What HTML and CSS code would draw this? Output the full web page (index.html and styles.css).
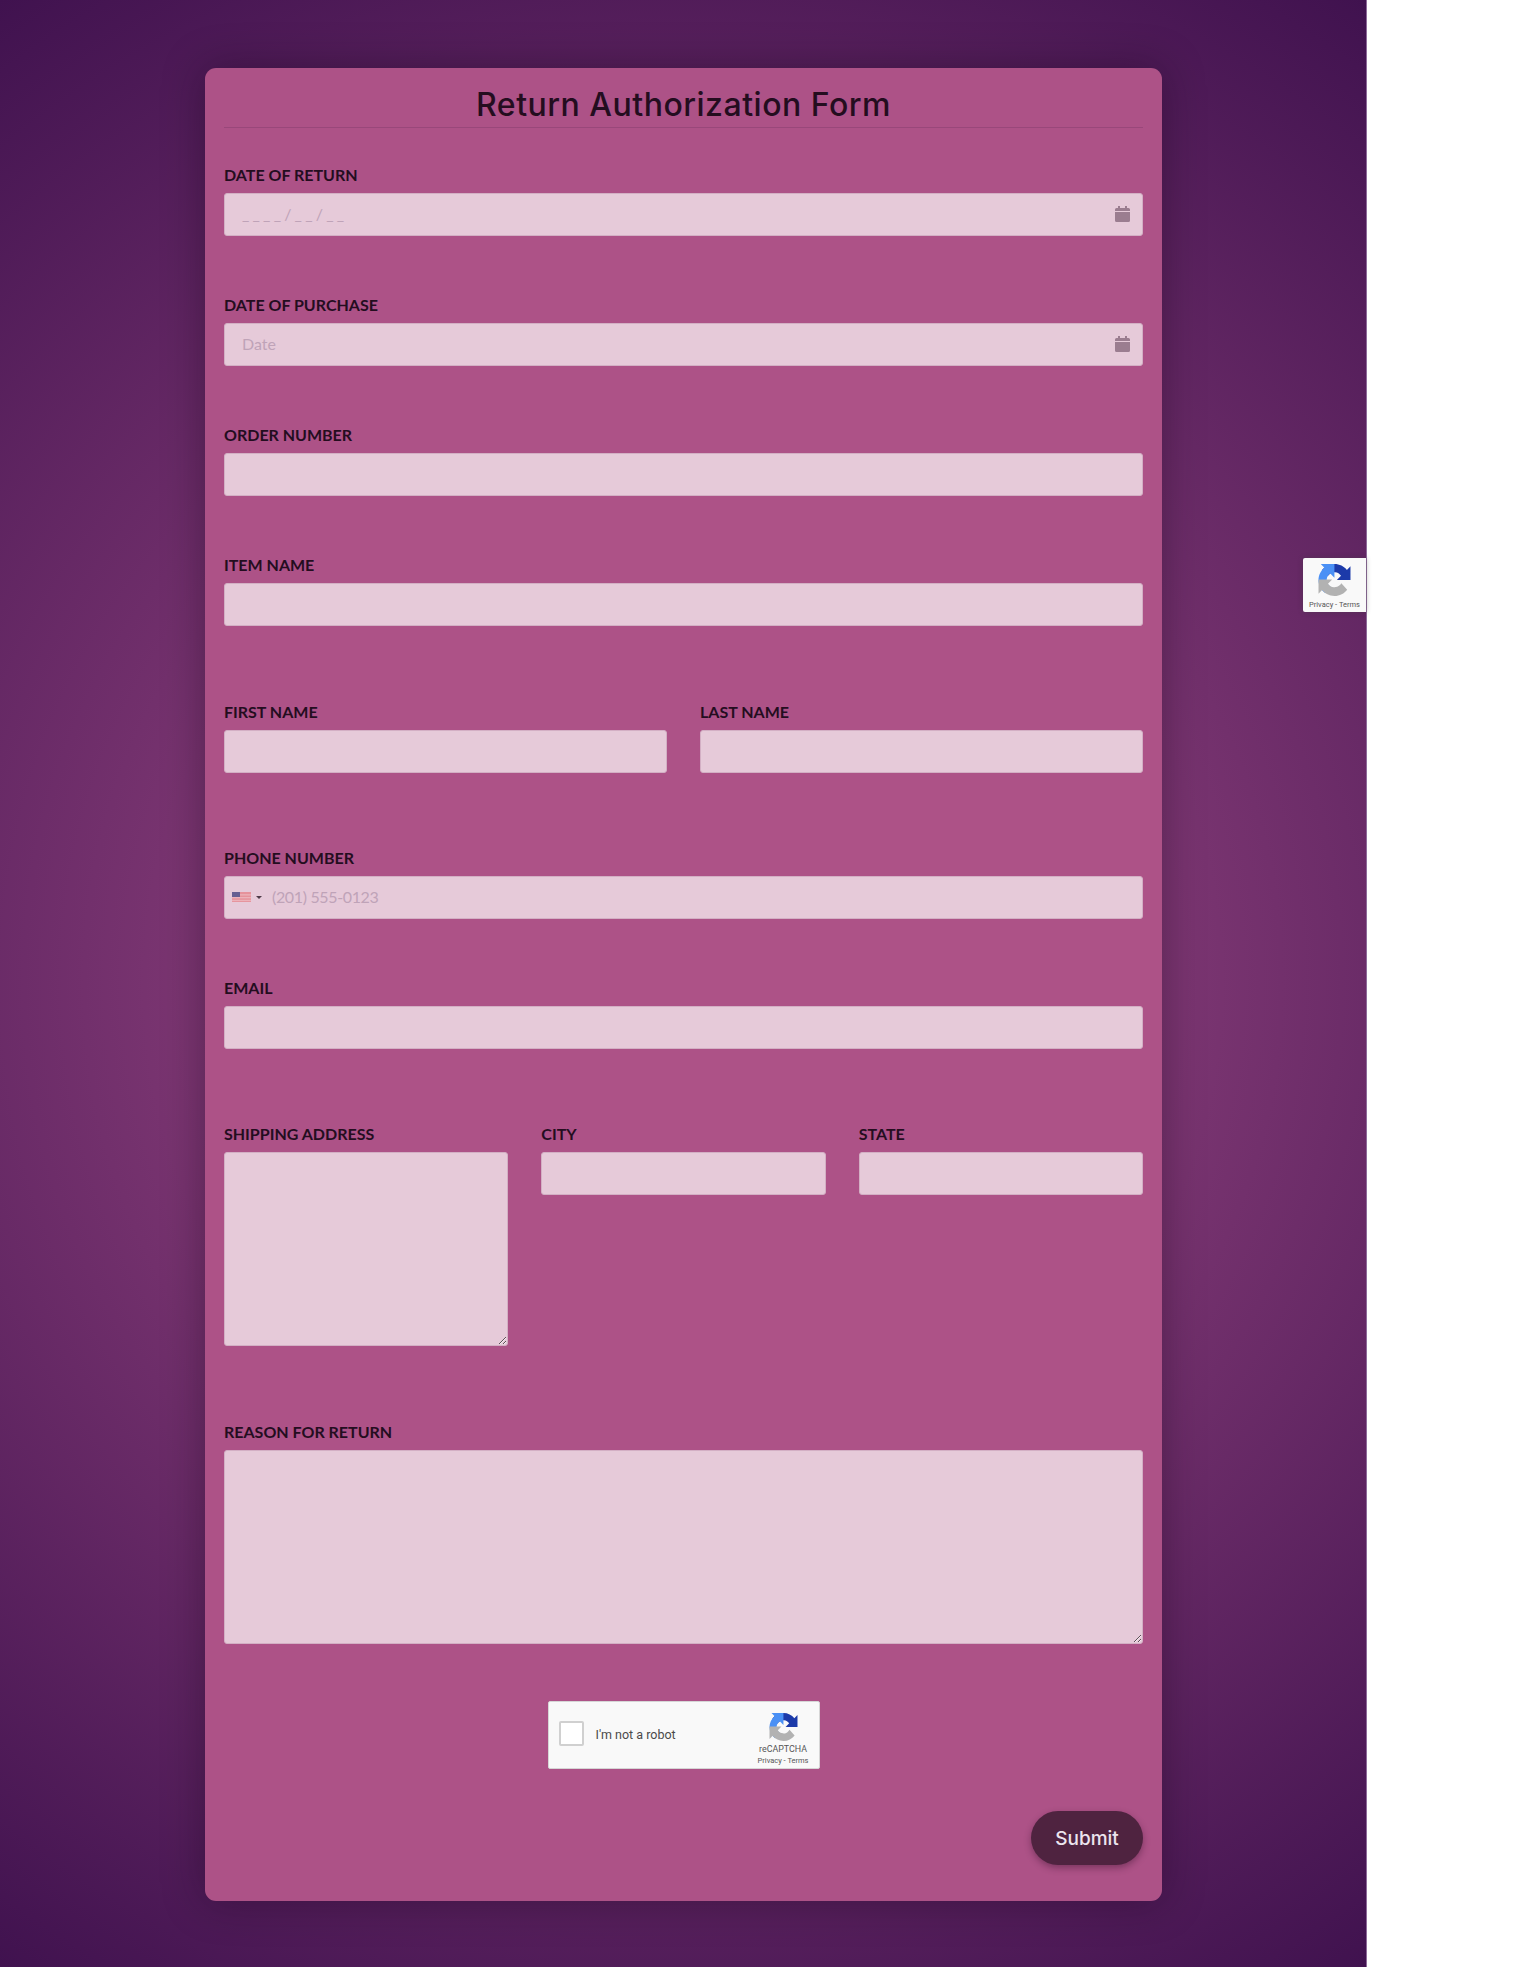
FILE: index.html
```html
<!DOCTYPE html>
<html lang="en">

<head>
  <meta charset="UTF-8" />
  <title>Return Authorization Form</title>
  <link rel="stylesheet" href="styles.css">
</head>

<body>
  <!-- reCAPTCHA logo, reused twice -->
  <svg class="sprite" width="0" height="0">
    <symbol id="captchaLogo" viewBox="0 0 64 64">
      <path d="M64 31.955l-.033-1.37V4.687l-7.16 7.16C50.948 4.674 42.033.093 32.05.093c-10.4 0-19.622 4.96-25.458 12.64l11.736 11.86a15.55 15.55 0 0 1 4.754-5.334c2.05-1.6 4.952-2.906 8.968-2.906.485 0 .86.057 1.135.163 4.976.393 9.288 3.14 11.828 7.124l-8.307 8.307 26.3.007" fill="#1c3aa9" />
      <path d="M31.862.094l-1.37.033H4.594l7.16 7.16C4.58 13.147 0 22.06 0 32.046c0 10.4 4.96 19.622 12.64 25.458L24.5 45.768a15.55 15.55 0 0 1-5.334-4.754c-1.6-2.05-2.906-4.952-2.906-8.968 0-.485.057-.86.163-1.135.393-4.976 3.14-9.288 7.124-11.828l8.307 8.307.007-26.3" fill="#4a90f5" />
      <path d="M0 32.037l.033 1.37v25.898l7.16-7.16c5.86 7.173 14.774 11.754 24.76 11.754 10.4 0 19.622-4.96 25.458-12.64L45.674 38.4a15.55 15.55 0 0 1-4.754 5.334c-2.05 1.6-4.952 2.906-8.968 2.906-.485 0-.86-.057-1.135-.163-4.976-.393-9.288-3.14-11.828-7.124l8.307-8.307-26.3-.007" fill="#b2b2b2" />
    </symbol>
    <symbol id="calendarIcon" viewBox="0 0 15 16">
      <path d="M3 0h2v2h5V0h2v2h1.500A1.500 1.500 0 0 1 15 3.500V5H0V3.500A1.500 1.500 0 0 1 1.500 2H3zM0 6h15v8.500a1.500 1.500 0 0 1-1.500 1.500h-12A1.500 1.500 0 0 1 0 14.500z" fill="currentColor" />
    </symbol>
  </svg>

  <div class="page">
    <form class="card">
      <h1 class="title">Return Authorization Form</h1>

      <!-- Dates et commande -->
      <div class="section first">
        <div class="field">
          <label>DATE OF RETURN</label>
          <div class="input-wrap">
            <input class="date-mask" type="text" placeholder="____/__/__">
            <svg class="cal"><use href="#calendarIcon" /></svg>
          </div>
        </div>
        <div class="field">
          <label>DATE OF PURCHASE</label>
          <div class="input-wrap">
            <input type="text" placeholder="Date">
            <svg class="cal"><use href="#calendarIcon" /></svg>
          </div>
        </div>
        <div class="field">
          <label>ORDER NUMBER</label>
          <input type="text">
        </div>
        <div class="field">
          <label>ITEM NAME</label>
          <input type="text">
        </div>
      </div>

      <div class="section row two">
        <div class="field">
          <label>FIRST NAME</label>
          <input type="text">
        </div>
        <div class="field">
          <label>LAST NAME</label>
          <input type="text">
        </div>
      </div>

      <div class="section contact">
        <div class="field">
          <label>PHONE NUMBER</label>
          <div class="input-wrap">
            <input class="phone" type="text" placeholder="(201) 555-0123">
            <div class="flag-box">
              <svg class="flag" viewBox="0 0 19 10">
                <rect width="19" height="10" fill="#e6929b" />
                <rect y="2.200" width="19" height="1.300" fill="#ecb2ba" />
                <rect y="5" width="19" height="1.300" fill="#ecb2ba" />
                <rect y="7.800" width="19" height="1.300" fill="#ecb2ba" />
                <rect width="8" height="5" fill="#675f92" />
              </svg>
              <span class="caret"></span>
            </div>
          </div>
        </div>
        <div class="field">
          <label>EMAIL</label>
          <input type="text">
        </div>
      </div>

      <div class="section row three">
        <div class="field">
          <label>SHIPPING ADDRESS</label>
          <textarea></textarea>
        </div>
        <div class="field">
          <label>CITY</label>
          <input type="text">
        </div>
        <div class="field">
          <label>STATE</label>
          <input type="text">
        </div>
      </div>

      <div class="section reason">
        <div class="field">
          <label>REASON FOR RETURN</label>
          <textarea></textarea>
        </div>
      </div>

      <!-- Captcha -->
      <div class="captcha">
        <span class="captcha-box"></span>
        <span class="captcha-text">I'm not a robot</span>
        <div class="captcha-brand">
          <svg class="captcha-logo"><use href="#captchaLogo" /></svg>
          <span class="captcha-name">reCAPTCHA</span>
          <span class="captcha-links">Privacy - Terms</span>
        </div>
      </div>

      <div class="actions">
        <button type="button" class="btn">Submit</button>
      </div>
    </form>

    <!-- Badge flottant -->
    <div class="badge">
      <svg class="badge-logo"><use href="#captchaLogo" /></svg>
      <span class="badge-links">Privacy - Terms</span>
    </div>
  </div>
</body>

</html>
```

FILE: styles.css
```css
/* --- Variables CSS --- */
:root {
  --card-color: #ad5287;
  --field-color: #e6cad9;
  --field-border: #d3afc4;
  --text-color: #240d1f;
  --placeholder: #bfa3b8;
  --icon-color: #9b7d90;
  --font-main: "Lato", "Noto Sans", sans-serif;
  --font-title: "Inter", "Lato", sans-serif;
}

/* --- Base --- */
html,
body {
  margin: 0;
  background: #ffffff;
}

body {
  font-family: var(--font-main);
  color: var(--text-color);
}

.sprite {
  position: absolute;
}

.page {
  position: relative;
  width: 1367px;
  height: 1967px;
  padding-top: 68px;
  box-sizing: border-box;
  border-right: 1px solid #8d6a99;
  background: radial-gradient(circle at 50% 50%, #a44e89 0%, #40124f 100%);
}

/* --- Carte --- */
.card {
  width: 957px;
  box-sizing: border-box;
  margin: 0 0 0 205px;
  padding: 0 19px 36px;
  background: var(--card-color);
  border-radius: 11px;
  box-shadow: 0 0 42px rgba(20, 5, 20, 0.38);
}

.title {
  height: 59px;
  margin: 0;
  border-bottom: 1px solid #99477a;
  font-family: var(--font-title);
  font-size: 32px;
  font-weight: 500;
  line-height: 73px;
  letter-spacing: 0.5px;
  text-align: center;
  box-sizing: content-box;
}

/* --- Champs --- */
.section {
  margin-bottom: 75.500px;
}

.section.first {
  padding-top: 37px;
  margin-bottom: 76.500px;
}

.section.row {
  display: grid;
  column-gap: 33px;
}

.section.two {
  grid-template-columns: 1fr 1fr;
}

.section.three {
  grid-template-columns: 1fr 1fr 1fr;
  margin-bottom: 76px;
}

.section.reason {
  margin-bottom: 57px;
}

.field {
  margin-bottom: 59.500px;
}

.field:last-child,
.row .field {
  margin-bottom: 0;
}

label {
  display: block;
  height: 20px;
  margin-bottom: 8px;
  font-size: 16px;
  font-weight: 700;
  line-height: 20px;
}

input,
textarea {
  display: block;
  width: 100%;
  box-sizing: border-box;
  border: 1px solid var(--field-border);
  border-radius: 3px;
  background: var(--field-color);
  font-family: var(--font-main);
  font-size: 16px;
  color: var(--text-color);
  outline: none;
}

input {
  height: 42.500px;
  padding: 0 17px 1px;
}

textarea {
  height: 194px;
  padding: 10px 17px;
}

input::placeholder {
  color: var(--placeholder);
  opacity: 1;
}

input.date-mask {
  letter-spacing: 3.200px;
}

.input-wrap {
  position: relative;
}

.cal {
  position: absolute;
  top: 13px;
  right: 13px;
  width: 15px;
  height: 16px;
  color: var(--icon-color);
}

/* --- Téléphone --- */
input.phone {
  padding-left: 47px;
  letter-spacing: -0.350px;
}

.flag-box {
  position: absolute;
  top: 16px;
  left: 8px;
  display: flex;
  align-items: center;
  gap: 5px;
}

.flag {
  display: block;
  width: 19px;
  height: 10px;
}

.caret {
  width: 0;
  height: 0;
  border-left: 3px solid transparent;
  border-right: 3px solid transparent;
  border-top: 3px solid #4d3a48;
}

/* --- Captcha --- */
.captcha {
  display: flex;
  align-items: center;
  width: 272px;
  height: 68px;
  box-sizing: border-box;
  margin: 0 auto 42px;
  padding: 0 10px;
  background: #f9f9f9;
  border: 1px solid #d6d6d6;
  border-radius: 2px;
  font-family: "Roboto", sans-serif;
}

.captcha-box {
  width: 25px;
  height: 25px;
  box-sizing: border-box;
  margin-top: -3px;
  background: #ffffff;
  border: 2px solid #d0d0d0;
  border-radius: 2px;
}

.captcha-text {
  margin-top: -2px;
  margin-left: 12px;
  font-size: 12.500px;
  color: #4a4a4a;
}

.captcha-brand {
  display: flex;
  flex-direction: column;
  align-items: center;
  margin-left: auto;
  padding-top: 7px;
  color: #555555;
}

.captcha-logo {
  width: 29px;
  height: 28px;
  margin-bottom: 3px;
}

.captcha-name {
  font-size: 8.900px;
  line-height: 11px;
}

.captcha-links {
  margin-top: 1px;
  font-size: 7.500px;
  line-height: 9px;
}

/* --- Bouton --- */
.actions {
  display: flex;
  justify-content: flex-end;
}

.btn {
  width: 112px;
  height: 54px;
  border: none;
  border-radius: 27px;
  background: #4f2340;
  box-shadow: 0 3px 7px rgba(50, 15, 40, 0.4);
  color: #ece4ee;
  font-family: var(--font-title);
  font-size: 19px;
  font-weight: 500;
  cursor: pointer;
}

/* --- Badge --- */
.badge {
  position: absolute;
  top: 558px;
  right: 0;
  display: flex;
  flex-direction: column;
  align-items: center;
  width: 63px;
  height: 54px;
  box-sizing: border-box;
  padding-top: 6px;
  background: #f9f9f9;
  border-radius: 2px 0 0 2px;
  box-shadow: 0 0 5px rgba(60, 60, 60, 0.4);
  font-family: "Roboto", sans-serif;
}

.badge-logo {
  width: 33px;
  height: 32px;
}

.badge-links {
  margin-top: 4px;
  font-size: 7.500px;
  line-height: 9px;
  color: #555555;
  white-space: nowrap;
}
```
